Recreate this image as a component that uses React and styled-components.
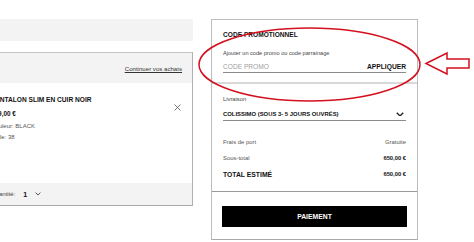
import React from 'react';
import styled, { createGlobalStyle } from 'styled-components';

const GlobalStyle = createGlobalStyle`
	html, body {
		margin: 0;
		padding: 0;
		background: #fff;
		overflow: hidden;
	}
	body {
		font-family: 'Liberation Sans', Arial, sans-serif;
		color: #1a1a1a;
	}
`;

const Chevron = ({ size = 7, weight = 1.4 }) => (
	<svg width={size} height={size * 0.6} viewBox="0 0 10 6" fill="none">
		<polyline points="1,1 5,5 9,1" stroke="#222" strokeWidth={weight * 1.4} />
	</svg>
);

const App = () => {
	return (
		<>
			<GlobalStyle />
			<Page>
				<CartColumn>
					<TopBar />
					<CartBox>
						<CartHeader>
							<a>Continuer vos achats</a>
						</CartHeader>
						<ProductBody>
							<ProductInfo>
								<ProductTitle>PANTALON SLIM EN CUIR NOIR</ProductTitle>
								<ProductPrice>649,00 €</ProductPrice>
								<ProductMeta>Couleur: BLACK</ProductMeta>
								<ProductMeta>Taille: 38</ProductMeta>
							</ProductInfo>
							<RemoveButton>
								<svg width="7" height="7" viewBox="0 0 7 7">
									<path d="M0.5 0.5 L6.5 6.5 M6.5 0.5 L0.5 6.5" stroke="#555" strokeWidth="0.8" />
								</svg>
							</RemoveButton>
						</ProductBody>
						<CartFooter>
							<span>Quantité:</span>
							<QtyValue>1</QtyValue>
							<Chevron size={6} weight={0.9} />
						</CartFooter>
					</CartBox>
				</CartColumn>

				<SummaryPanel>
					<PromoSection>
						<SectionTitle>CODE PROMOTIONNEL</SectionTitle>
						<Hint>Ajouter un code promo ou code parrainage</Hint>
						<PromoRow>
							<Placeholder>CODE PROMO</Placeholder>
							<ApplyButton>APPLIQUER</ApplyButton>
						</PromoRow>
					</PromoSection>

					<TotalsSection>
						<Label>Livraison</Label>
						<SelectRow>
							<span>COLISSIMO (SOUS 3- 5 JOURS OUVRÉS)</span>
							<Chevron size={8} weight={1.2} />
						</SelectRow>
						<TotalRow>
							<span>Frais de port</span>
							<span>Gratuite</span>
						</TotalRow>
						<TotalRow>
							<span>Sous-total</span>
							<Amount>650,00 €</Amount>
						</TotalRow>
						<TotalRow $big>
							<span>TOTAL ESTIMÉ</span>
							<Amount>650,00 €</Amount>
						</TotalRow>
					</TotalsSection>

					<PayButton>PAIEMENT</PayButton>
				</SummaryPanel>
			</Page>

			<Annotation width="474" height="242" viewBox="0 0 474 242">
				<ellipse cx="309.5" cy="64.5" rx="110.5" ry="36.5" fill="none" stroke="#d3111f" strokeWidth="1.5" />
				<polygon
					points="426,63.5 447,53 447,59 469,59 469,68 447,68 447,74"
					fill="#fff"
					stroke="#d3111f"
					strokeWidth="1.5"
					strokeLinejoin="miter"
				/>
			</Annotation>
		</>
	);
};

const Page = styled.div`
	display: flex;
	align-items: flex-start;
	gap: 18px;
	padding-top: 19px;
	margin-left: -27px;
`;

const CartColumn = styled.div`
	width: 220px;
	display: flex;
	flex-direction: column;
`;

const TopBar = styled.div`
	height: 22px;
	background: #f3f3f3;
	margin-bottom: 11px;
`;

const CartBox = styled.div`
	border: 1px solid #c4c4c4;
	border-right-color: #b0b0b0;
	border-bottom-color: #a8a8a8;
`;

const CartHeader = styled.div`
	height: 30px;
	background: #f3f3f3;
	display: flex;
	align-items: center;
	justify-content: flex-end;
	padding-right: 10px;

	a {
		font-size: 6.1px;
		color: #333;
		text-decoration: underline;
		margin-top: 1px;
	}
`;

const ProductBody = styled.div`
	height: 100px;
	display: flex;
	justify-content: space-between;
	padding: 0 11px 0 17px;
`;

const ProductInfo = styled.div`
	display: flex;
	flex-direction: column;
	padding-top: 12px;
`;

const ProductTitle = styled.div`
	font-size: 6.6px;
	font-weight: 700;
	line-height: 10px;
	color: #111;
`;

const ProductPrice = styled.div`
	font-size: 6.4px;
	font-weight: 700;
	line-height: 10px;
	margin-top: 4px;
	color: #111;
`;

const ProductMeta = styled.div`
	font-size: 6px;
	line-height: 8px;
	color: #555;
	margin-top: 3px;
`;

const RemoveButton = styled.div`
	margin-top: 21px;
	width: 7px;
	height: 7px;
	display: flex;
`;

const CartFooter = styled.div`
	height: 22px;
	background: #f3f3f3;
	display: flex;
	align-items: center;
	padding-left: 17px;
	font-size: 6px;
	color: #444;

	svg {
		margin-left: 8px;
	}
`;

const QtyValue = styled.span`
	margin-left: 8px;
	font-size: 7px;
	font-weight: 700;
	color: #111;
`;

const SummaryPanel = styled.div`
	width: 205px;
	height: 219px;
	border: 1px solid #bdbdbd;
	border-bottom-color: #aaa;
	display: flex;
	flex-direction: column;
`;

const PromoSection = styled.div`
	padding: 10px 11px 0 11px;
	border-bottom: 2px solid #d9d9d9;
	box-sizing: border-box;
	height: 64px;
	display: flex;
	flex-direction: column;
`;

const SectionTitle = styled.div`
	font-size: 6.6px;
	font-weight: 700;
	line-height: 10px;
	color: #111;
`;

const Hint = styled.div`
	font-size: 5.6px;
	line-height: 8px;
	color: #444;
	margin-top: 9px;
`;

const PromoRow = styled.div`
	margin-top: 5px;
	height: 9px;
	display: flex;
	align-items: center;
	justify-content: space-between;
	border-bottom: 1px solid #8a8a8a;
	padding-bottom: 1px;
`;

const Placeholder = styled.span`
	font-size: 6.6px;
	color: #a0a0a0;
`;

const ApplyButton = styled.span`
	font-size: 6.7px;
	font-weight: 700;
	color: #111;
`;

const TotalsSection = styled.div`
	padding: 11px 11px 12px 11px;
	border-bottom: 1px solid #9a9a9a;
	display: flex;
	flex-direction: column;
`;

const Label = styled.div`
	font-size: 5.8px;
	line-height: 8px;
	color: #444;
`;

const SelectRow = styled.div`
	margin-top: 6px;
	height: 10px;
	display: flex;
	align-items: center;
	justify-content: space-between;
	border-bottom: 1px solid #8a8a8a;
	padding-bottom: 1px;
	font-size: 5.9px;
	font-weight: 700;
	color: #111;

	svg {
		margin-right: 2px;
	}
`;

const TotalRow = styled.div`
	margin-top: 6px;
	height: 10px;
	display: flex;
	align-items: center;
	justify-content: space-between;
	font-size: ${(p) => (p.$big ? '6.8px' : '5.9px')};
	font-weight: ${(p) => (p.$big ? 700 : 400)};
	color: ${(p) => (p.$big ? '#111' : '#555')};

	&:nth-child(3) {
		margin-top: 16px;
	}
`;

const Amount = styled.span`
	font-size: 5.8px;
	font-weight: 700;
	color: #111;
`;

const PayButton = styled.div`
	margin: 14px 10px 0 10px;
	height: 21px;
	background: #000;
	color: #fff;
	font-size: 6.8px;
	font-weight: 700;
	display: flex;
	align-items: center;
	justify-content: center;
`;

const Annotation = styled.svg`
	position: absolute;
	left: 0;
	top: 0;
	pointer-events: none;
`;

export default App;
